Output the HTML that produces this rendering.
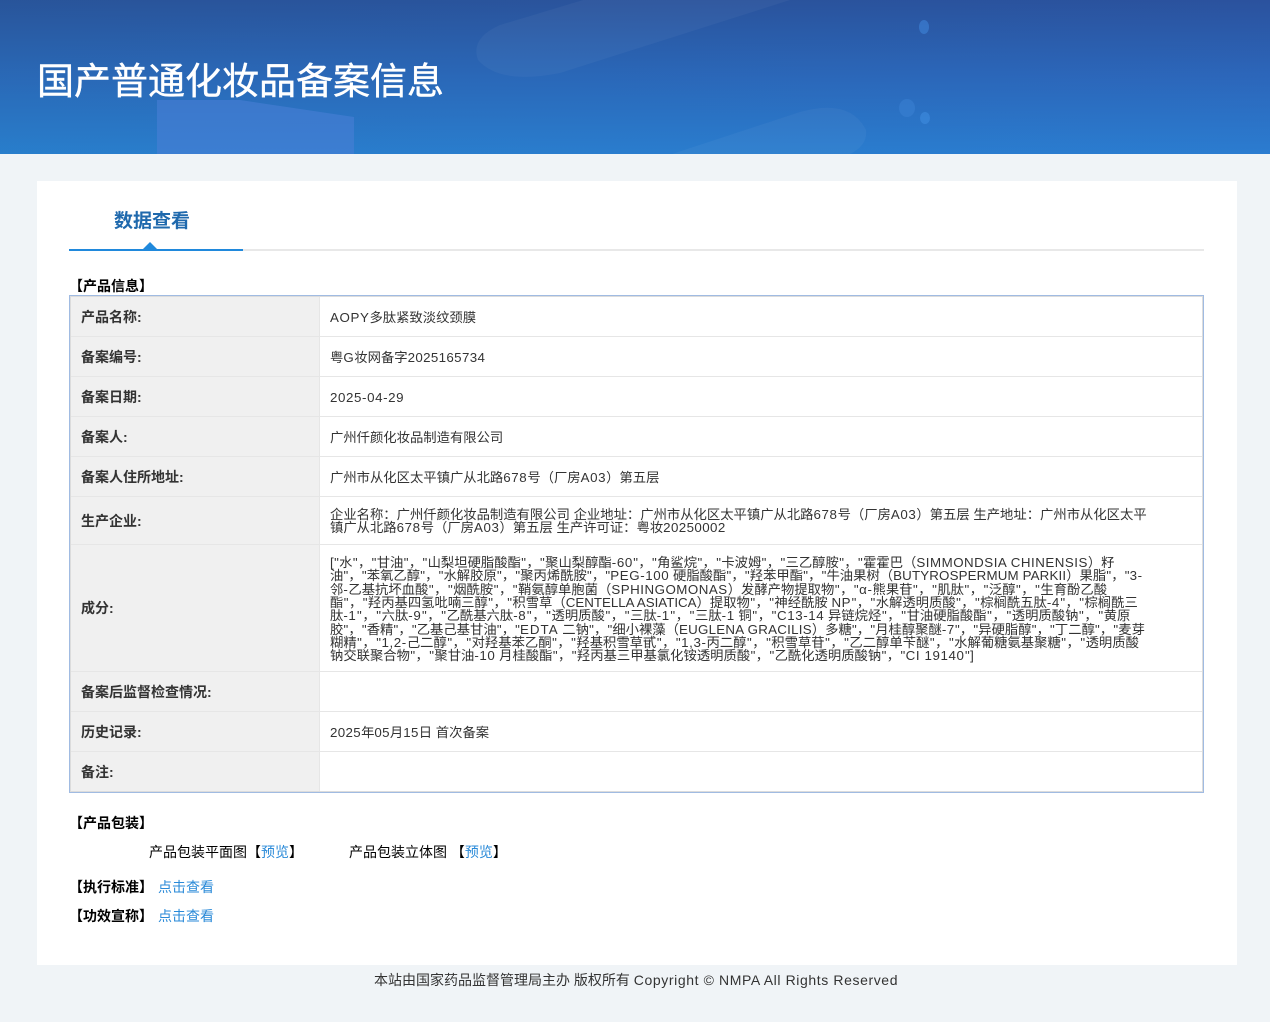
<!DOCTYPE html>
<html lang="zh-CN"><head><meta charset="utf-8"><title>国产普通化妆品备案信息</title>
<style>
*{box-sizing:border-box;margin:0;padding:0}
html,body{width:1270px;height:1022px;overflow:hidden;background:#f0f4f7}
body{position:relative;font-family:"Liberation Sans","Noto Sans CJK SC",sans-serif;font-size:13.33px;color:#333}
.a{position:absolute;white-space:nowrap}
#hd{position:absolute;left:0;top:0;width:1270px;height:154px;overflow:hidden;background:linear-gradient(90deg,rgba(30,110,170,.12),rgba(50,90,210,.1)),linear-gradient(180deg,#2a5198 0%,#2b68b8 50%,#2a80d0 100%)}
#hd h1{position:absolute;left:37px;top:55px;font-size:37px;line-height:54px;font-weight:400;color:#fff;white-space:nowrap;-webkit-text-stroke:.4px #fff}
#card{position:absolute;left:37px;top:181px;width:1200px;height:784px;background:#fff}
.h{font-weight:700;color:#000;line-height:16px;font-size:14px}
.lb{font-weight:700;color:#333;left:81px;line-height:16px;font-size:14px}
.v{left:330px;color:#333;line-height:16px}
.r{position:absolute;left:71px;width:1131px;height:1px;background:#e6e6e6}
.l{color:#2a8ad8}
u{text-decoration:none;letter-spacing:.6px}
i{font-style:normal;padding:0 var(--q,.5px)}
</style></head><body>
<div id="hd">
<svg width="1270" height="154" style="position:absolute;left:0;top:0">
<path d="M157 154V100L240 100L354 117V154Z" fill="#4a7ed6" opacity=".6"/>
<path d="M583 0L790 0L560 73Q500 85 478 60Q470 38 500 25Z" fill="#fff" opacity=".04"/>
<path d="M672 154L800 112Q850 98 866 130Q868 145 850 154Z" fill="#fff" opacity=".04"/>
<ellipse cx="924" cy="27" rx="5" ry="7" fill="#3f84d8" opacity=".6"/>
<ellipse cx="907" cy="108" rx="8" ry="9" fill="#3f84d8" opacity=".45"/>
<ellipse cx="925" cy="118" rx="5" ry="6" fill="#3f8ce0" opacity=".6"/>
</svg>
<h1>国产普通化妆品备案信息</h1>
</div>
<div id="card"></div>

<div class="a" style="left:114px;top:208px;font-size:19px;font-weight:700;line-height:28px;color:#1f69ad">数据查看</div>
<div class="a" style="left:69px;top:249px;width:1135px;height:2px;background:#e8e8e8"></div>
<div class="a" style="left:69px;top:249px;width:174px;height:2px;background:#2089dc"></div>
<div class="a" style="left:143px;top:242px;width:0;height:0;border-left:7px solid transparent;border-right:7px solid transparent;border-bottom:7px solid #2089dc"></div>

<div class="a h" style="left:69px;top:278px">【产品信息】</div>

<div class="a" style="left:69px;top:295px;width:1135px;height:498px;border:1px solid #a0bbe2;background:#fff"></div>
<div class="a" style="left:70px;top:296px;width:1133px;height:496px;border:1px solid #dcdcdc"></div>
<div class="a" style="left:71px;top:297px;width:248px;height:494px;background:#f0f0f0"></div>
<div class="a" style="left:319px;top:297px;width:1px;height:494px;background:#e6e6e6"></div>
<div class="r" style="top:336px"></div>
<div class="r" style="top:376px"></div>
<div class="r" style="top:416px"></div>
<div class="r" style="top:456px"></div>
<div class="r" style="top:496px"></div>
<div class="r" style="top:544px"></div>
<div class="r" style="top:671px"></div>
<div class="r" style="top:711px"></div>
<div class="r" style="top:751px"></div>

<div class="a lb" style="top:309px">产品名称:</div><div class="a v" style="top:310px"><u>AOPY</u>多肽紧致淡纹颈膜</div>
<div class="a lb" style="top:349px">备案编号:</div><div class="a v" style="top:350px">粤<u>G</u>妆网备字<u style="letter-spacing:.35px">2025165734</u></div>
<div class="a lb" style="top:389px">备案日期:</div><div class="a v" style="top:390px"><u>2025-04-29</u></div>
<div class="a lb" style="top:429px">备案人:</div><div class="a v" style="top:430px">广州仟颜化妆品制造有限公司</div>
<div class="a lb" style="top:469px">备案人住所地址:</div><div class="a v" style="top:470px">广州市从化区太平镇广从北路<u>678</u>号（厂房<u>A03</u>）第五层</div>
<div class="a lb" style="top:513px">生产企业:</div>
<div class="a v" style="top:508px;line-height:13.33px">企业名称：广州仟颜化妆品制造有限公司 企业地址：广州市从化区太平镇广从北路<u>678</u>号（厂房<u>A03</u>）第五层 生产地址：广州市从化区太平<br>镇广从北路<u>678</u>号（厂房<u>A03</u>）第五层 生产许可证：粤妆<u style="letter-spacing:.4px">20250002</u></div>
<div class="a lb" style="top:600px">成分:</div>
<div class="a v" style="top:556px;line-height:13.33px"><span style="--q:.37px">[<i>"</i>水<i>"</i>，<i>"</i>甘油<i>"</i>，<i>"</i>山梨坦硬脂酸酯<i>"</i>，<i>"</i>聚山梨醇酯<u>-60</u><i>"</i>，<i>"</i>角鲨烷<i>"</i>，<i>"</i>卡波姆<i>"</i>，<i>"</i>三乙醇胺<i>"</i>，<i>"</i>霍霍巴（<u style="letter-spacing:.5px">SIMMONDSIA CHINENSIS</u>）籽</span><br><span style="--q:.16px">油<i>"</i>，<i>"</i>苯氧乙醇<i>"</i>，<i>"</i>水解胶原<i>"</i>，<i>"</i>聚丙烯酰胺<i>"</i>，<i>"</i><u>PEG-100</u> 硬脂酸酯<i>"</i>，<i>"</i>羟苯甲酯<i>"</i>，<i>"</i>牛油果树（<u style="letter-spacing:.15px">BUTYROSPERMUM PARKII</u>）果脂<i>"</i>，<i>"</i><u>3-</u></span><br><span style="--q:.53px">邻<u>-</u>乙基抗坏血酸<i>"</i>，<i>"</i>烟酰胺<i>"</i>，<i>"</i>鞘氨醇单胞菌（<u style="letter-spacing:.5px">SPHINGOMONAS</u>）发酵产物提取物<i>"</i>，<i>"</i><u>α-</u>熊果苷<i>"</i>，<i>"</i>肌肽<i>"</i>，<i>"</i>泛醇<i>"</i>，<i>"</i>生育酚乙酸</span><br><span style="--q:.44px">酯<i>"</i>，<i>"</i>羟丙基四氢吡喃三醇<i>"</i>，<i>"</i>积雪草（<u style="letter-spacing:0">CENTELLA ASIATICA</u>）提取物<i>"</i>，<i>"</i>神经酰胺 <u>NP</u><i>"</i>，<i>"</i>水解透明质酸<i>"</i>，<i>"</i>棕榈酰五肽<u>-4</u><i>"</i>，<i>"</i>棕榈酰三</span><br><span style="--q:.62px">肽<u>-1</u><i>"</i>，<i>"</i>六肽<u>-9</u><i>"</i>，<i>"</i>乙酰基六肽<u>-8</u><i>"</i>，<i>"</i>透明质酸<i>"</i>，<i>"</i>三肽<u>-1</u><i>"</i>，<i>"</i>三肽<u>-1</u> 铜<i>"</i>，<i>"</i><u>C13-14</u> 异链烷烃<i>"</i>，<i>"</i>甘油硬脂酸酯<i>"</i>，<i>"</i>透明质酸钠<i>"</i>，<i>"</i>黄原</span><br><span style="--q:.15px">胶<i>"</i>，<i>"</i>香精<i>"</i>，<i>"</i>乙基己基甘油<i>"</i>，<i>"</i><u style="letter-spacing:1px">EDTA</u> 二钠<i>"</i>，<i>"</i>细小裸藻（<u style="letter-spacing:.25px">EUGLENA GRACILIS</u>）多糖<i>"</i>，<i>"</i>月桂醇聚醚<u>-7</u><i>"</i>，<i>"</i>异硬脂醇<i>"</i>，<i>"</i>丁二醇<i>"</i>，<i>"</i>麦芽</span><br><span style="--q:.5px">糊精<i>"</i>，<i>"</i><u>1,2-</u>己二醇<i>"</i>，<i>"</i>对羟基苯乙酮<i>"</i>，<i>"</i>羟基积雪草甙<i>"</i>，<i>"</i><u>1,3-</u>丙二醇<i>"</i>，<i>"</i>积雪草苷<i>"</i>，<i>"</i>乙二醇单苄醚<i>"</i>，<i>"</i>水解葡糖氨基聚糖<i>"</i>，<i>"</i>透明质酸</span><br><span style="--q:.41px">钠交联聚合物<i>"</i>，<i>"</i>聚甘油<u>-10</u> 月桂酸酯<i>"</i>，<i>"</i>羟丙基三甲基氯化铵透明质酸<i>"</i>，<i>"</i>乙酰化透明质酸钠<i>"</i>，<i>"</i><u>CI 19140</u><i>"</i>]</span></div>
<div class="a lb" style="top:684px">备案后监督检查情况:</div>
<div class="a lb" style="top:724px">历史记录:</div><div class="a v" style="top:725px"><u style="letter-spacing:.35px">2025</u>年<u style="letter-spacing:.35px">05</u>月<u style="letter-spacing:.35px">15</u>日 首次备案</div>
<div class="a lb" style="top:764px">备注:</div>

<div class="a h" style="left:69px;top:815px">【产品包装】</div>
<div class="a" style="left:149px;top:844px;line-height:16px;color:#000;font-size:14px">产品包装平面图【<span class="l">预览</span>】</div>
<div class="a" style="left:349px;top:844px;line-height:16px;color:#000;font-size:14px">产品包装立体图 【<span class="l">预览</span>】</div>
<div class="a h" style="left:69px;top:879px">【执行标准】</div><div class="a l" style="left:158px;top:879px;line-height:16px;font-size:14px">点击查看</div>
<div class="a h" style="left:69px;top:908px">【功效宣称】</div><div class="a l" style="left:158px;top:908px;line-height:16px;font-size:14px">点击查看</div>

<div class="a" style="left:374px;top:972px;font-size:14px;line-height:16px;color:#333">本站由国家药品监督管理局主办 版权所有 <u>Copyright © NMPA All Rights Reserved</u></div>
</body></html>
